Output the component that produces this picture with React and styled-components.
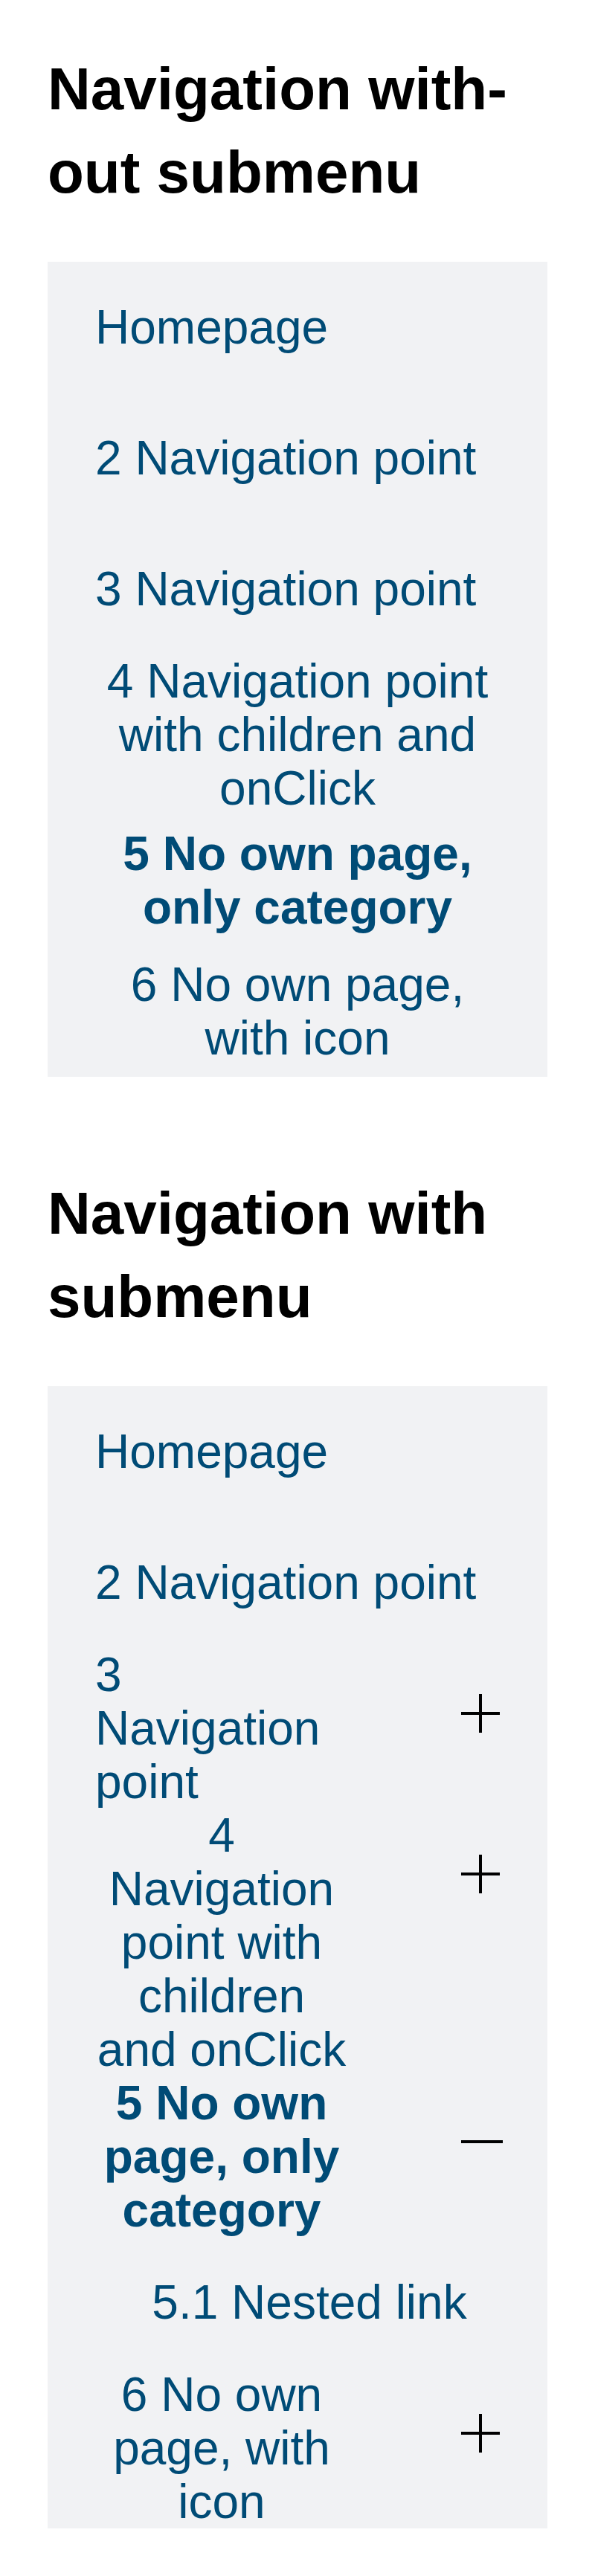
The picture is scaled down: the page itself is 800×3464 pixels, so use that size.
import React from 'react';
import styled, {createGlobalStyle} from 'styled-components';

const GlobalStyle = createGlobalStyle`
  body {
    margin: 0;
    background: #ffffff;
    font-family: 'Liberation Sans', Arial, sans-serif;
  }
`;

const Section = styled.section`
  padding: 64px;
`;

const Title = styled.h1`
  margin: 0 0 64px;
  font-size: 80px;
  line-height: 112px;
  font-weight: 700;
  color: #000;
`;

const Panel = styled.ul`
  list-style: none;
  margin: 0;
  padding: 0;
  background: #f1f2f4;
`;

const Item = styled.li`
  display: flex;
  align-items: flex-start;
  padding: 0 60px 0 64px;
`;

const Label = styled.div`
  display: flex;
  align-items: center;
  min-height: 176px;
  flex: ${p => (p.$narrow ? '0 0 340px' : '1')};
  width: ${p => (p.$narrow ? '340px' : 'auto')};
  padding-right: ${p => (p.$narrow ? '0' : '4px')};
`;

const NavLink = styled.a`
  flex: 1;
  display: block;
  font-size: 64px;
  line-height: 72px;
  color: #004b76;
  text-decoration: none;
  text-align: left;
`;

const NavButton = styled.button`
  flex: 1;
  display: block;
  margin: 0;
  padding: 0;
  border: none;
  background: none;
  font-family: inherit;
  font-size: 64px;
  line-height: 72px;
  font-weight: ${p => (p.$bold ? 700 : 400)};
  color: #004b76;
  text-align: center;
  cursor: pointer;
`;

const Toggle = styled.span`
  margin-left: auto;
  height: 176px;
  width: 56px;
  display: flex;
  align-items: center;
`;

const SubList = styled.ul`
  list-style: none;
  margin: 0;
  padding: 0 64px 0 96px;
`;

const SubItem = styled.li`
  display: flex;
  align-items: center;
  min-height: 176px;
`;

const Plus = () => (
  <svg width="56" height="52" viewBox="0 0 56 52">
    <rect x="0" y="24" width="52" height="4" fill="#000" />
    <rect x="24" y="0" width="4" height="52" fill="#000" />
  </svg>
);

const Minus = () => (
  <svg width="56" height="4" viewBox="0 0 56 4">
    <rect x="0" y="0" width="56" height="4" fill="#000" />
  </svg>
);

const items = [
  {label: 'Homepage', type: 'link'},
  {label: '2 Navigation point', type: 'link'},
  {label: '3 Navigation point', type: 'link', children: true},
  {label: '4 Navigation point with children and onClick', type: 'button', children: true},
  {label: '5 No own page, only category', type: 'button', bold: true, children: true, open: true},
  {label: '6 No own page, with icon', type: 'button', children: true},
];

const Entry = ({item}) =>
  item.type === 'link' ? (
    <NavLink href="#">{item.label}</NavLink>
  ) : (
    <NavButton $bold={item.bold}>{item.label}</NavButton>
  );

const FlatNav = () => (
  <Panel>
    {items.map(item => (
      <Item key={item.label}>
        <Label>
          <Entry item={item} />
        </Label>
      </Item>
    ))}
  </Panel>
);

const SubmenuNav = () => (
  <Panel>
    {items.map(item => (
      <React.Fragment key={item.label}>
        <Item>
          <Label $narrow={item.children}>
            <Entry item={item} />
          </Label>
          {item.children && (
            <Toggle>{item.open ? <Minus /> : <Plus />}</Toggle>
          )}
        </Item>
        {item.open && (
          <li>
            <SubList>
              <SubItem>
                <NavButton>5.1 Nested link</NavButton>
              </SubItem>
            </SubList>
          </li>
        )}
      </React.Fragment>
    ))}
  </Panel>
);

export default function App() {
  return (
    <>
      <GlobalStyle />
      <Section>
        <Title>Navigation with&shy;out submenu</Title>
        <FlatNav />
      </Section>
      <Section>
        <Title>Navigation with submenu</Title>
        <SubmenuNav />
      </Section>
    </>
  );
}
